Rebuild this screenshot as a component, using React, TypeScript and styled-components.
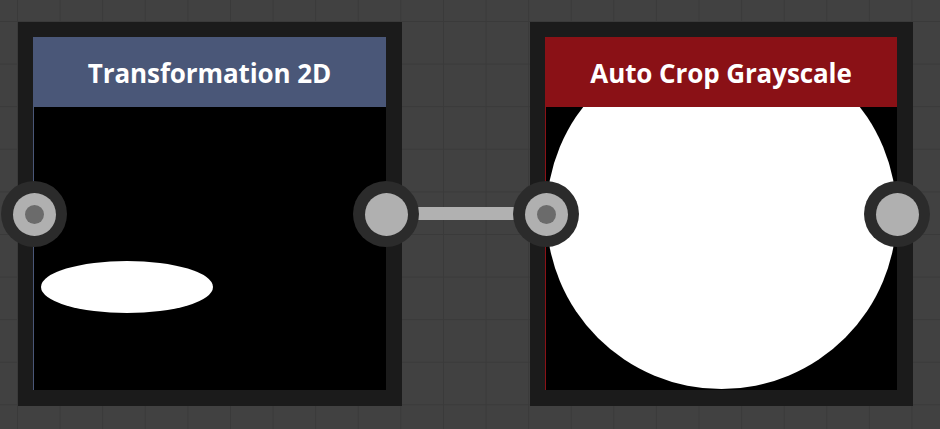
import React, { FC } from "react";
import styled, { createGlobalStyle } from "styled-components";

const GlobalStyle = createGlobalStyle`
  html, body {
    margin: 0;
    padding: 0;
    background: #414141;
  }
`;

const Canvas = styled.div`
  width: 940px;
  height: 429px;
  overflow: hidden;
  box-sizing: border-box;
  padding: 22px 0 0 18px;
  display: flex;
  align-items: flex-start;
  background-color: #414141;
  background-image: linear-gradient(to right, #3a3a3a 1px, transparent 1px),
    linear-gradient(to bottom, #3a3a3a 1px, transparent 1px);
  background-size: 42.6px 42.6px;
  background-position: 17px 21px;
  font-family: "Open Sans", "Noto Sans", sans-serif;
`;

const NodeFrame = styled.div<{ $width: number }>`
  position: relative;
  width: ${(p) => p.$width}px;
  height: 384px;
  box-sizing: border-box;
  padding: 15px 16px 16px 15px;
  background: #1b1b1b;
  display: flex;
  flex-direction: column;
`;

const Header = styled.div<{ $color: string }>`
  height: 70px;
  flex: none;
  background: ${(p) => p.$color};
  color: #ffffff;
  display: flex;
  align-items: center;
  justify-content: center;
  padding-top: 2px;
  box-sizing: border-box;
  font-size: 26px;
  font-weight: 700;
  letter-spacing: -0.1px;
  position: relative;
  z-index: 1;
`;

const Preview = styled.div<{ $edge: string }>`
  flex: 1;
  background: #000;
  border-left: 1px solid ${(p) => p.$edge};
  position: relative;
`;

const PreviewSvg = styled.svg`
  position: absolute;
  left: 0;
  bottom: 0;
  display: block;
`;

const Port = styled.div<{ $side: "left" | "right" }>`
  position: absolute;
  top: 159px;
  ${(p) => p.$side}: -17px;
  width: 66px;
  height: 66px;
  border-radius: 50%;
  background: #2b2b2b;
  display: flex;
  align-items: center;
  justify-content: center;
  z-index: 2;
`;

const PortFace = styled.div`
  width: 43px;
  height: 43px;
  border-radius: 50%;
  background: #b0b0b0;
  display: flex;
  align-items: center;
  justify-content: center;
`;

const PortDot = styled.div`
  width: 19px;
  height: 19px;
  border-radius: 50%;
  background: #6b6b6b;
`;

const WireSlot = styled.div`
  width: 128px;
  height: 384px;
  display: flex;
  align-items: center;
  flex: none;
`;

const Wire = styled.div`
  width: 100%;
  height: 13px;
  margin-top: -1px;
  background: #b1b1b1;
`;

interface NodeProps {
  title: string;
  color: string;
  width: number;
  children: React.ReactNode;
}

const Node: FC<NodeProps> = ({ title, color, width, children }) => (
  <NodeFrame $width={width}>
    <Header $color={color}>{title}</Header>
    <Preview $edge={color}>{children}</Preview>
    <Port $side="left">
      <PortFace>
        <PortDot />
      </PortFace>
    </Port>
    <Port $side="right">
      <PortFace />
    </Port>
  </NodeFrame>
);

const App: FC = () => (
  <>
    <GlobalStyle />
    <Canvas>
      <Node title="Transformation 2D" color="#4a5778" width={384}>
        <PreviewSvg width="352" height="284" viewBox="0 0 352 284">
          <ellipse cx="93" cy="181" rx="86" ry="26" fill="#fff" />
        </PreviewSvg>
      </Node>
      <WireSlot>
        <Wire />
      </WireSlot>
      <Node title="Auto Crop Grayscale" color="#8a1116" width={383}>
        <PreviewSvg width="352" height="360" viewBox="0 0 352 360">
          <circle cx="175.5" cy="184" r="175" fill="#fff" />
        </PreviewSvg>
      </Node>
    </Canvas>
  </>
);

export default App;
